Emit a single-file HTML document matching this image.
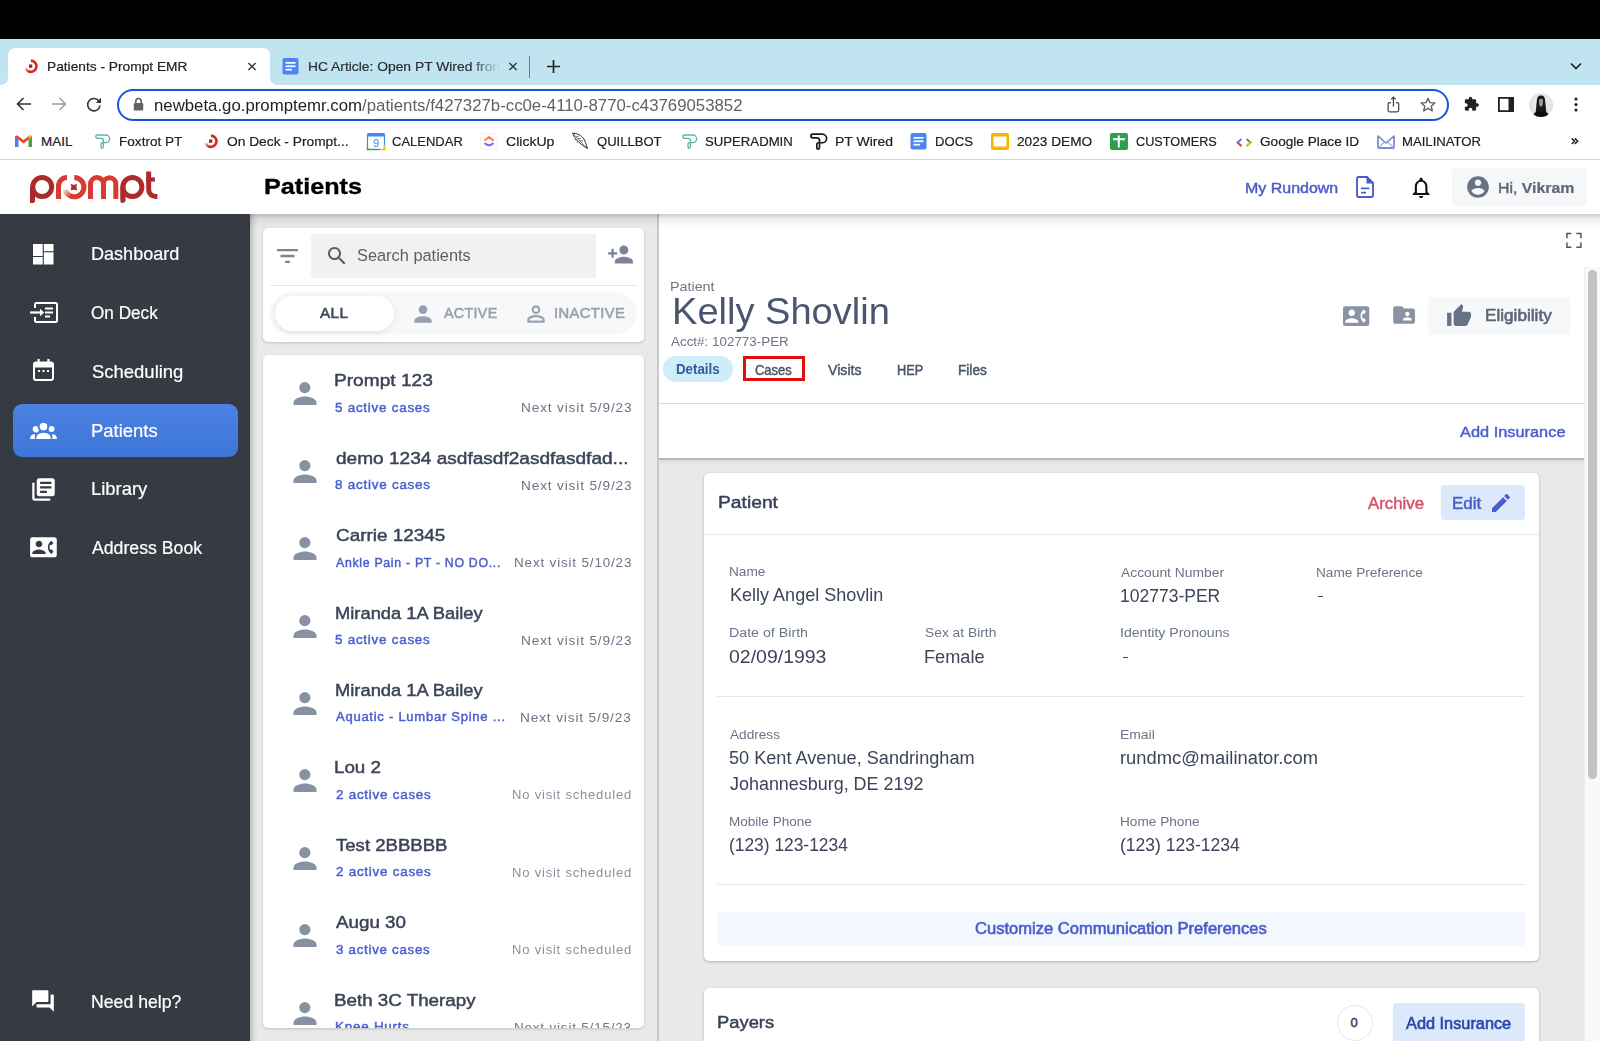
<!DOCTYPE html>
<html><head><meta charset="utf-8">
<style>
*{box-sizing:border-box;margin:0;padding:0}
html,body{width:1600px;height:1041px;overflow:hidden;background:#fff;font-family:"Liberation Sans",sans-serif}
.a{position:absolute}
.t{position:absolute;white-space:nowrap;line-height:1}
svg{position:absolute;display:block;overflow:visible}
</style></head><body>
<div class="a" style="left:0px;top:0px;width:1600px;height:39px;background:#000;"></div>
<div class="a" style="left:0px;top:39px;width:1600px;height:46px;background:#c1e5f0;"></div>
<div class="a" style="left:0px;top:85px;width:1600px;height:74px;background:#fff;"></div>
<div class="a" style="left:0px;top:159px;width:1600px;height:1px;background:#d4d4d4;"></div>
<svg style="left:0;top:47px" width="290" height="38" viewBox="0 0 290 38"><path d="M0 38 Q8 38 8 30 V9 Q8 1 16 1 H262 Q270 1 270 9 V30 Q270 38 278 38 Z" fill="#fff"/></svg>
<svg style="left:24px;top:59px;" width="14" height="14" viewBox="0 0 14 14"><defs><linearGradient id="fvg" x1="4.5" y1="12.5" x2="1" y2="8" gradientUnits="userSpaceOnUse"><stop offset="0" stop-color="#d8261f"/><stop offset="1" stop-color="#d8261f" stop-opacity="0"/></linearGradient></defs><path d="M6.9 1.65 A5.6 5.6 0 1 1 4.1 12.1" fill="none" stroke="#d8261f" stroke-width="2.6"/><path d="M4.1 12.1 A5.6 5.6 0 0 1 1.5 8.7" fill="none" stroke="url(#fvg)" stroke-width="2.6"/><rect x="5" y="5.5" width="3.3" height="3.3" fill="#a8201a"/></svg>
<div id="t1" class="t" style="left:47.10px;top:60.36px;font-size:13.19px;color:#202124;font-weight:400;-webkit-text-stroke:0.2px currentColor;transform:scaleX(1.0414);transform-origin:0 0;">Patients - Prompt EMR</div>
<svg style="left:247px;top:62px;" width="10" height="9" viewBox="0 0 10 10"><path d="M1 1 L9 9 M9 1 L1 9" stroke="#333" stroke-width="1.5"/></svg>
<svg style="left:282px;top:58px;" width="17" height="17" viewBox="0 0 17 17"><rect x="0.5" y="0" width="16" height="16.5" rx="2" fill="#4d86f0"/><rect x="3.5" y="4" width="10" height="1.7" fill="#fff"/><rect x="3.5" y="7.4" width="10" height="1.7" fill="#fff"/><rect x="3.5" y="10.8" width="6.5" height="1.7" fill="#fff"/></svg>
<div id="t2" class="t" style="left:307.51px;top:60.36px;font-size:13.19px;color:#2a2f33;font-weight:400;-webkit-text-stroke:0.2px currentColor;transform:scaleX(1.0495);transform-origin:0 0;-webkit-mask-image:linear-gradient(90deg,#000 85%,transparent);">HC Article: Open PT Wired fron</div>
<svg style="left:508px;top:62px;" width="10" height="9" viewBox="0 0 10 10"><path d="M1 1 L9 9 M9 1 L1 9" stroke="#333" stroke-width="1.5"/></svg>
<div class="a" style="left:529px;top:56px;width:1px;height:22px;background:#6d7b80;"></div>
<svg style="left:547px;top:60px;" width="13" height="13" viewBox="0 0 13 13"><path d="M6.5 0 V13 M0 6.5 H13" stroke="#222" stroke-width="1.7"/></svg>
<svg style="left:1570px;top:62px;" width="12" height="8" viewBox="0 0 12 8"><path d="M1 1.5 L6 6.5 L11 1.5" fill="none" stroke="#222" stroke-width="1.7"/></svg>
<svg style="left:16px;top:97px;" width="16" height="14" viewBox="0 0 16 14"><path d="M15 7 H2 M7.5 1 L1.5 7 L7.5 13" fill="none" stroke="#333" stroke-width="1.6"/></svg>
<svg style="left:51px;top:97px;" width="16" height="14" viewBox="0 0 16 14"><path d="M1 7 H14 M8.5 1 L14.5 7 L8.5 13" fill="none" stroke="#9aa0a6" stroke-width="1.6"/></svg>
<svg style="left:86px;top:97px;" width="16" height="15" viewBox="0 0 16 15"><path d="M13.2 4.5 A6.2 6.2 0 1 0 14 8.5" fill="none" stroke="#333" stroke-width="1.6"/><path d="M15 0.8 V6 H9.8 Z" fill="#333"/></svg>
<div class="a" style="left:117px;top:88.5px;width:1331.5px;height:32.3px;background:#fff;border:2px solid #1a55d6;border-radius:16.5px;"></div>
<svg style="left:133px;top:97px;" width="11" height="14" viewBox="0 0 11 14"><path d="M2.8 6 V4.2 A2.7 2.7 0 0 1 8.2 4.2 V6" fill="none" stroke="#5f6368" stroke-width="1.6"/><rect x="0.8" y="6" width="9.4" height="7.5" rx="1.2" fill="#5f6368"/></svg>
<div id="t3" class="t" style="left:154.21px;top:97.57px;font-size:15.65px;color:#202124;font-weight:400;transform:scaleX(1.0731);transform-origin:0 0;">newbeta.go.promptemr.com<span style="color:#5f6368">/patients/f427327b-cc0e-4110-8770-c43769053852</span></div>
<svg style="left:1387px;top:96px;" width="13" height="17" viewBox="0 0 13 17"><path d="M4 6.6 H2.6 Q1.1 6.6 1.1 8.1 V14.3 Q1.1 15.8 2.6 15.8 H10.2 Q11.7 15.8 11.7 14.3 V8.1 Q11.7 6.6 10.2 6.6 H8.8 M6.4 10.6 V1.2 M4.2 3.4 L6.4 1.2 L8.6 3.4" fill="none" stroke="#454545" stroke-width="1.25"/></svg>
<svg style="left:1420px;top:97px;" width="16" height="15" viewBox="0 0 16 15"><path d="M8 1.2 L10 5.6 L14.8 6 L11.2 9.2 L12.3 13.9 L8 11.4 L3.7 13.9 L4.8 9.2 L1.2 6 L6 5.6 Z" fill="none" stroke="#5f6368" stroke-width="1.4" stroke-linejoin="round"/></svg>
<svg style="left:1463px;top:96px;" width="17" height="16" viewBox="0 0 24 24"><path d="M20.5 11H19V7c0-1.1-.9-2-2-2h-4V3.5C13 2.12 11.88 1 10.5 1S8 2.12 8 3.5V5H4c-1.1 0-1.99.9-1.99 2v3.8H3.5c1.49 0 2.7 1.21 2.7 2.7s-1.21 2.7-2.7 2.7H2V20c0 1.1.9 2 2 2h3.8v-1.5c0-1.49 1.21-2.7 2.7-2.7 1.49 0 2.7 1.21 2.7 2.7V22H17c1.1 0 2-.9 2-2v-4h1.5c1.38 0 2.5-1.12 2.5-2.5S21.88 11 20.5 11z" fill="#222"/></svg>
<svg style="left:1498px;top:97px;" width="16" height="15" viewBox="0 0 16 15"><rect x="0.9" y="0.9" width="14.2" height="13.2" fill="none" stroke="#222" stroke-width="1.8"/><rect x="10.5" y="0.9" width="4.6" height="13.2" fill="#222"/></svg>
<div class="a" style="left:1529px;top:92.5px;width:24px;height:24px;border-radius:50%;background:radial-gradient(circle at 50% 40%,#f2f2f2,#d8d8d8);overflow:hidden"><svg style="left:0;top:0" width="24" height="24" viewBox="0 0 24 24"><path d="M6.5 22 C7 16 7.5 10 8 6.5 C8.6 3.2 10 2.6 12 2.6 C14 2.6 15.4 3.2 16 6.5 C16.5 10 17 16 17.5 22 Z" fill="#1a1a1a"/><path d="M10 6.5 Q12 4.8 14 6.5 L13.8 12 Q12 15.5 10.2 12 Z" fill="#9a9a9a"/><path d="M3 25 Q4 19.5 9 18 L12 19.5 L15 18 Q20 19.5 21 25 Z" fill="#0d0d0d"/></svg></div>
<svg style="left:1574px;top:97px;" width="4" height="15" viewBox="0 0 4 15"><circle cx="2" cy="2" r="1.6" fill="#222"/><circle cx="2" cy="7.5" r="1.6" fill="#222"/><circle cx="2" cy="13" r="1.6" fill="#222"/></svg>
<svg style="left:15px;top:135px;" width="17" height="12" viewBox="0 0 17 12"><path d="M0 1.5 V12 H3.3 V4.5 L8.5 8.5 L13.7 4.5 V12 H17 V1.5 Q15.8 0 14.2 0.8 L8.5 5 L2.8 0.8 Q1.2 0 0 1.5 Z" fill="#ea4335"/><path d="M0 1.5 V12 H3.3 V4.5 Z" fill="#4285f4"/><path d="M13.7 4.5 V12 H17 V1.5 Z" fill="#34a853"/><path d="M13.7 4.5 L17 1.5 Q16 0 14.2 0.8 L13.7 1.2 Z" fill="#fbbc04"/></svg>
<div id="t4" class="t" style="left:41.11px;top:135.11px;font-size:13.48px;color:#202124;font-weight:400;-webkit-text-stroke:0.2px currentColor;transform:scaleX(1.0000);transform-origin:0 0;">MAIL</div>
<svg style="left:95px;top:134px;" width="15" height="15" viewBox="0 0 15 15"><path d="M2.2 1 H10.8 A3.8 3.8 0 0 1 10.8 8.6 H7.6 Q6 8.6 6 10.2 V12.8 Q6 14.4 7.2 14.3 Q8.4 14.1 8.4 12.6 V6.6 Q8.4 4.3 6.2 4.3 H2.6 Q0.8 4.3 0.8 2.6 Q0.8 1 2.2 1 Z" fill="none" stroke="#5db3a8" stroke-width="1.3"/></svg>
<div id="t5" class="t" style="left:118.93px;top:135.11px;font-size:13.48px;color:#202124;font-weight:400;-webkit-text-stroke:0.2px currentColor;transform:scaleX(1.0081);transform-origin:0 0;">Foxtrot PT</div>
<svg style="left:204px;top:134px;" width="14" height="14" viewBox="0 0 14 14"><defs><linearGradient id="fvg" x1="4.5" y1="12.5" x2="1" y2="8" gradientUnits="userSpaceOnUse"><stop offset="0" stop-color="#d8261f"/><stop offset="1" stop-color="#d8261f" stop-opacity="0"/></linearGradient></defs><path d="M6.9 1.65 A5.6 5.6 0 1 1 4.1 12.1" fill="none" stroke="#d8261f" stroke-width="2.6"/><path d="M4.1 12.1 A5.6 5.6 0 0 1 1.5 8.7" fill="none" stroke="url(#fvg)" stroke-width="2.6"/><rect x="5" y="5.5" width="3.3" height="3.3" fill="#a8201a"/></svg>
<div id="t6" class="t" style="left:226.93px;top:135.11px;font-size:13.48px;color:#202124;font-weight:400;-webkit-text-stroke:0.2px currentColor;transform:scaleX(1.0212);transform-origin:0 0;">On Deck - Prompt...</div>
<svg style="left:367px;top:133px;" width="18" height="17" viewBox="0 0 18 17"><rect x="0.5" y="0.5" width="17" height="16" rx="1.5" fill="#fff" stroke="#4285f4" stroke-width="1.2"/><path d="M0.5 15 V16.5 H13" stroke="#34a853" stroke-width="1.6" fill="none"/><path d="M17.5 12 V16.5 H13" stroke="#fbbc04" stroke-width="1.6" fill="none"/><rect x="0.5" y="0.5" width="17" height="3" fill="#4285f4"/><text x="9" y="14" font-size="11" text-anchor="middle" fill="#4285f4" font-family="Liberation Sans">9</text></svg>
<div id="t7" class="t" style="left:392.29px;top:135.11px;font-size:13.48px;color:#202124;font-weight:400;-webkit-text-stroke:0.2px currentColor;transform:scaleX(0.9653);transform-origin:0 0;">CALENDAR</div>
<svg style="left:480px;top:133px;" width="18" height="17" viewBox="0 0 18 17"><rect x="0.5" y="0.5" width="17" height="16" rx="3" fill="#fff" stroke="#eee" stroke-width="0.8"/><path d="M5 7.2 L9 4 L13 7.2" fill="none" stroke="#ff7a59" stroke-width="2" stroke-linecap="round"/><path d="M5 10.5 Q9 14 13 10.5" fill="none" stroke="#7b68ee" stroke-width="2" stroke-linecap="round"/></svg>
<div id="t8" class="t" style="left:505.79px;top:135.11px;font-size:13.48px;color:#202124;font-weight:400;-webkit-text-stroke:0.2px currentColor;transform:scaleX(1.0435);transform-origin:0 0;">ClickUp</div>
<svg style="left:571px;top:132px;" width="18" height="18" viewBox="0 0 18 18"><path d="M1.5 1 Q9 1.5 13 7 Q15 11 16.5 16.5 Q11 13.5 7 9.5 Q3 5.5 1.5 1 Z" fill="none" stroke="#333" stroke-width="1"/><path d="M2.5 2 L16 16.5 M5 5 L7.5 4.3 M7 7 L10 6.3 M9 9 L12 8.8 M4.5 6 L4 8.5 M6.5 8.3 L6.3 10.5" stroke="#444" stroke-width="0.7"/></svg>
<div id="t9" class="t" style="left:597.21px;top:135.11px;font-size:13.48px;color:#202124;font-weight:400;-webkit-text-stroke:0.2px currentColor;transform:scaleX(0.9697);transform-origin:0 0;">QUILLBOT</div>
<svg style="left:682px;top:134px;" width="15" height="15" viewBox="0 0 15 15"><path d="M2.2 1 H10.8 A3.8 3.8 0 0 1 10.8 8.6 H7.6 Q6 8.6 6 10.2 V12.8 Q6 14.4 7.2 14.3 Q8.4 14.1 8.4 12.6 V6.6 Q8.4 4.3 6.2 4.3 H2.6 Q0.8 4.3 0.8 2.6 Q0.8 1 2.2 1 Z" fill="none" stroke="#5db3a8" stroke-width="1.3"/></svg>
<div id="t10" class="t" style="left:705.27px;top:135.11px;font-size:13.48px;color:#202124;font-weight:400;-webkit-text-stroke:0.2px currentColor;transform:scaleX(0.9773);transform-origin:0 0;">SUPERADMIN</div>
<svg style="left:810px;top:133px;" width="17" height="17" viewBox="0 0 15 15"><path d="M2.2 1 H10.8 A3.8 3.8 0 0 1 10.8 8.6 H7.6 Q6 8.6 6 10.2 V12.8 Q6 14.4 7.2 14.3 Q8.4 14.1 8.4 12.6 V6.6 Q8.4 4.3 6.2 4.3 H2.6 Q0.8 4.3 0.8 2.6 Q0.8 1 2.2 1 Z" fill="none" stroke="#1a1a1a" stroke-width="1.5"/></svg>
<div id="t11" class="t" style="left:834.72px;top:135.11px;font-size:13.48px;color:#202124;font-weight:400;-webkit-text-stroke:0.2px currentColor;transform:scaleX(1.0370);transform-origin:0 0;">PT Wired</div>
<svg style="left:910px;top:133px;" width="17" height="17" viewBox="0 0 17 17"><rect x="0.5" y="0" width="16" height="16.5" rx="2" fill="#4d86f0"/><rect x="3.5" y="4" width="10" height="1.7" fill="#fff"/><rect x="3.5" y="7.4" width="10" height="1.7" fill="#fff"/><rect x="3.5" y="10.8" width="6.5" height="1.7" fill="#fff"/></svg>
<div id="t12" class="t" style="left:935.24px;top:135.11px;font-size:13.48px;color:#202124;font-weight:400;-webkit-text-stroke:0.2px currentColor;transform:scaleX(0.9737);transform-origin:0 0;">DOCS</div>
<svg style="left:991px;top:133px;" width="18" height="17" viewBox="0 0 18 17"><rect x="0" y="0" width="18" height="17" rx="2" fill="#f4b400"/><rect x="2.5" y="3.5" width="13" height="10" fill="#fff"/></svg>
<div id="t13" class="t" style="left:1016.89px;top:135.11px;font-size:13.48px;color:#202124;font-weight:400;-webkit-text-stroke:0.2px currentColor;transform:scaleX(1.0137);transform-origin:0 0;">2023 DEMO</div>
<svg style="left:1110px;top:133px;" width="18" height="17" viewBox="0 0 18 17"><rect x="0" y="0" width="18" height="17" rx="2" fill="#2f9e4f"/><rect x="3" y="5.2" width="12" height="2" fill="#fff"/><rect x="7.8" y="2.5" width="2" height="12" fill="#fff"/></svg>
<div id="t14" class="t" style="left:1136.41px;top:135.11px;font-size:13.48px;color:#202124;font-weight:400;-webkit-text-stroke:0.2px currentColor;transform:scaleX(0.9412);transform-origin:0 0;">CUSTOMERS</div>
<svg style="left:1236px;top:137.5px;" width="16" height="9" viewBox="0 0 16 9"><path d="M5.5 1 L1.5 4.5 L5.5 8" fill="none" stroke="#4285f4" stroke-width="1.9"/><path d="M1.5 4.5 L5.5 8" stroke="#ea4335" stroke-width="1.9"/><path d="M10.5 1 L14.5 4.5 L10.5 8" fill="none" stroke="#34a853" stroke-width="1.9"/><path d="M14.5 4.5 L10.5 8" stroke="#fbbc04" stroke-width="1.9"/></svg>
<div id="t15" class="t" style="left:1259.93px;top:135.11px;font-size:13.48px;color:#202124;font-weight:400;-webkit-text-stroke:0.2px currentColor;transform:scaleX(1.0103);transform-origin:0 0;">Google Place ID</div>
<svg style="left:1377px;top:135px;" width="18" height="14" viewBox="0 0 18 14"><path d="M1 1 V13 H17 V1 L9 8 Z" fill="none" stroke="#5664c4" stroke-width="1.3" stroke-linejoin="round"/><path d="M1 13 L7 7.5 M17 13 L11 7.5" stroke="#86b8e6" stroke-width="1.1"/><path d="M1 1 L9 8 L17 1" fill="none" stroke="#7fb2e5" stroke-width="0.9"/></svg>
<div id="t16" class="t" style="left:1402.27px;top:135.11px;font-size:13.48px;color:#202124;font-weight:400;-webkit-text-stroke:0.2px currentColor;transform:scaleX(0.9750);transform-origin:0 0;">MAILINATOR</div>
<svg style="left:1565px;top:133px;" width="20" height="16" viewBox="1565 133 20 16"><path d="M1572.2 138.9 L1574.6 141.2 L1572.2 143.5 M1575.3 138.9 L1577.7 141.2 L1575.3 143.5" fill="none" stroke="#1a1a1a" stroke-width="1.5" stroke-linecap="round" stroke-linejoin="round"/></svg>
<div class="a" style="left:0px;top:160px;width:1600px;height:54px;background:#fff;"></div>
<svg style="left:28px;top:170px;" width="132" height="36" viewBox="28 170 132 36">
<defs><linearGradient id="lgf" x1="70" y1="197" x2="63" y2="188" gradientUnits="userSpaceOnUse"><stop offset="0" stop-color="#d93a30"/><stop offset="1" stop-color="#d93a30" stop-opacity="0"/></linearGradient></defs>
<g fill="none" stroke-width="5" stroke-linecap="butt">
<path d="M32.5 200.5 V187" stroke="#ad2a2c"/>
<circle cx="42.2" cy="187" r="9.5" stroke="#ad2a2c"/>
<path d="M58.5 199 V186 A8.5 8.5 0 0 1 67 177.5" stroke="#d93a30"/>
<path d="M74.3 177.6 A9.6 9.6 0 1 1 69.5 195.5" stroke="#d93a30"/>
<path d="M69.5 195.5 A9.6 9.6 0 0 1 65 189.7" stroke="url(#lgf)"/>
<path d="M90.5 199 V184 A6.5 6.5 0 0 1 103.5 184 V199 M103.3 184 A6.25 6.25 0 0 1 115.8 184 V199" stroke="#d93a30"/>
<path d="M122.9 200.5 V187" stroke="#ad2a2c"/>
<circle cx="132.4" cy="187" r="9.5" stroke="#ad2a2c"/>
<path d="M148.65 171.5 V189.5 A7 7 0 0 0 155.65 196.5 H157.4" stroke="#ad2a2c"/>
</g>
<path d="M30 187 H35 V201 Q35 203 33 203 H30 Z M120.6 187 H125.3 V201 Q125.3 202.8 123.3 202.8 H120.6 Z" fill="#ad2a2c"/>
<rect x="146.2" y="177.4" width="8.7" height="4.2" fill="#ad2a2c"/>
<path d="M70.7 184.1 Q73.9 185.5 77.1 184.1 Q75.7 187.3 77.1 190.5 Q73.9 189.1 70.7 190.5 Q72.1 187.3 70.7 184.1 Z" fill="#b02a2a"/>
</svg>
<div id="t17" class="t" style="left:263.80px;top:176.30px;font-size:22.39px;color:#000;font-weight:700;-webkit-text-stroke:0.35px currentColor;transform:scaleX(1.1250);transform-origin:0 0;">Patients</div>
<div id="t18" class="t" style="left:1245.18px;top:180.06px;font-size:15.29px;color:#4a5dcc;font-weight:400;-webkit-text-stroke:0.45px currentColor;transform:scaleX(1.0455);transform-origin:0 0;">My Rundown</div>
<svg style="left:1356px;top:176px;" width="18" height="22" viewBox="0 0 18 22"><path d="M2.5 1 H11 L17 7 V19.5 Q17 21 15.5 21 H2.5 Q1 21 1 19.5 V2.5 Q1 1 2.5 1 Z" fill="none" stroke="#4a5dcc" stroke-width="1.9"/><path d="M10.5 0.5 L17.5 7.5 H10.5 Z" fill="#4a5dcc"/><path d="M5 12.3 H13.3 M5 16.7 H10" stroke="#4a5dcc" stroke-width="1.8"/></svg>
<svg style="left:1408.4px;top:174.8px;" width="26.25" height="25.3" viewBox="0 0 24 24"><path d="M12 22c1.1 0 2-.9 2-2h-4c0 1.1.89 2 2 2zm6-6v-5c0-3.07-1.64-5.64-4.5-6.32V4c0-.83-.67-1.5-1.5-1.5s-1.5.67-1.5 1.5v.68C7.63 5.36 6 7.92 6 11v5l-2 2v1h16v-1l-2-2zm-2 1H8v-6c0-2.48 1.51-4.5 4-4.5s4 2.02 4 4.5v6z" fill="#111"/></svg>
<div class="a" style="left:1452px;top:168px;width:135px;height:38px;background:#f6f7f9;border-radius:3px;"></div>
<svg style="left:1465px;top:174px;" width="26" height="26" viewBox="0 0 24 24"><path d="M12 2C6.48 2 2 6.48 2 12s4.48 10 10 10 10-4.48 10-10S17.52 2 12 2zm0 3c1.66 0 3 1.34 3 3s-1.34 3-3 3-3-1.34-3-3 1.34-3 3-3zm0 14.2c-2.5 0-4.71-1.28-6-3.22.03-1.99 4-3.08 6-3.08 1.99 0 5.97 1.09 6 3.08-1.29 1.94-3.5 3.22-6 3.22z" fill="#687185"/></svg>
<div id="t19" class="t" style="left:1497.85px;top:180.30px;font-size:15.00px;color:#5d6678;font-weight:400;-webkit-text-stroke:0.45px currentColor;transform:scaleX(1.0577);transform-origin:0 0;">Hi, <b style="-webkit-text-stroke:0.2px currentColor">Vikram</b></div>
<div class="a" style="left:0px;top:214px;width:250px;height:827px;background:#363a42;"></div>
<div class="a" style="left:13px;top:404px;width:225px;height:53px;background:linear-gradient(#4a81e2,#3e76d8);border-radius:9px;"></div>
<svg style="left:33px;top:243.5px;" width="20.5" height="20.5" viewBox="0 0 20.5 20.5"><rect x="0" y="0" width="9.7" height="12" fill="#fff"/><rect x="0" y="13" width="9.7" height="7.5" fill="#fff"/><rect x="10.8" y="0" width="9.7" height="7.2" fill="#fff"/><rect x="10.8" y="8.3" width="9.7" height="12.2" fill="#fff"/></svg>
<div id="t20" class="t" style="left:91.20px;top:245.02px;font-size:18.55px;color:#fff;font-weight:400;-webkit-text-stroke:0.2px currentColor;transform:scaleX(0.9742);transform-origin:0 0;">Dashboard</div>
<svg style="left:29.5px;top:301.5px;" width="28" height="21" viewBox="0 0 28 21"><path d="M5 6 V2.5 Q5 1 6.5 1 H25.5 Q27 1 27 2.5 V18.5 Q27 20 25.5 20 H6.5 Q5 20 5 18.5 V15" fill="none" stroke="#fff" stroke-width="2"/><path d="M0 10.5 H12" stroke="#fff" stroke-width="2.2"/><path d="M10 6.8 L14.2 10.5 L10 14.2 Z" fill="#fff"/><rect x="15" y="5.5" width="8" height="2" fill="#fff"/><rect x="15" y="9.5" width="8" height="2" fill="#fff"/><rect x="15" y="13.5" width="5" height="2" fill="#fff"/></svg>
<div id="t21" class="t" style="left:91.27px;top:303.52px;font-size:18.55px;color:#fff;font-weight:400;-webkit-text-stroke:0.2px currentColor;transform:scaleX(0.9254);transform-origin:0 0;">On Deck</div>
<svg style="left:33px;top:359px;" width="21" height="22" viewBox="0 0 21 22"><rect x="1" y="3.5" width="19" height="17.5" rx="2" fill="none" stroke="#fff" stroke-width="2"/><rect x="1" y="3.5" width="19" height="5" fill="#fff"/><rect x="4.5" y="0" width="2.2" height="4" fill="#fff"/><rect x="14.3" y="0" width="2.2" height="4" fill="#fff"/><rect x="5" y="11" width="2" height="2" fill="#fff"/><rect x="9.5" y="11" width="2" height="2" fill="#fff"/><rect x="14" y="11" width="2" height="2" fill="#fff"/></svg>
<div id="t22" class="t" style="left:91.54px;top:362.52px;font-size:18.55px;color:#fff;font-weight:400;-webkit-text-stroke:0.2px currentColor;transform:scaleX(0.9967);transform-origin:0 0;">Scheduling</div>
<svg style="left:26px;top:416px;" width="36" height="28" viewBox="26 416 36 28"><circle cx="43.5" cy="426.6" r="3.95" fill="#fff"/><path d="M38.7 428.5 A3 3 0 1 0 38.3 431.4 Q38.9 430 39.3 429.3 Z" fill="#fff"/><circle cx="35.7" cy="428.9" r="3" fill="#fff"/><circle cx="51.5" cy="428.9" r="3" fill="#fff"/><path d="M36.2 438.9 Q36.2 432.8 43.55 432.8 Q50.9 432.8 50.9 438.9 Z" fill="#fff"/><path d="M30 438.9 Q30 434.8 34.9 434 L34.9 438.9 Z" fill="#fff"/><path d="M56.9 438.9 Q56.9 434.8 52.3 434 L52.3 438.9 Z" fill="#fff"/><circle cx="43.5" cy="426.6" r="5" fill="none" stroke="#4580e0" stroke-width="1.6"/></svg>
<div id="t23" class="t" style="left:91.40px;top:421.52px;font-size:18.55px;color:#fff;font-weight:400;-webkit-text-stroke:0.2px currentColor;transform:scaleX(0.9955);transform-origin:0 0;">Patients</div>
<svg style="left:30.25px;top:475.5px;" width="27" height="27" viewBox="0 0 24 24"><path d="M4 6H2v14c0 1.1.9 2 2 2h14v-2H4V6zm16-4H8c-1.1 0-2 .9-2 2v12c0 1.1.9 2 2 2h12c1.1 0 2-.9 2-2V4c0-1.1-.9-2-2-2zm-1 9H9V9h10v2zm-4 4H9v-2h6v2zm4-8H9V5h10v2z" fill="#fff"/></svg>
<div id="t24" class="t" style="left:90.85px;top:480.02px;font-size:18.55px;color:#fff;font-weight:400;-webkit-text-stroke:0.2px currentColor;transform:scaleX(0.9945);transform-origin:0 0;">Library</div>
<svg style="left:30px;top:534.2px;" width="26.9" height="26.7" viewBox="0 0 24 24"><path d="M22 3H2C.9 3 0 3.9 0 5v14c0 1.1.9 2 2 2h20c1.1 0 1.99-.9 1.99-2L24 5c0-1.1-.9-2-2-2zM8 6c1.660 0 3 1.34 3 3s-1.34 3-3 3-3-1.34-3-3 1.34-3 3-3zm6 12H2v-1c0-2 4-3.100 6-3.100s6 1.100 6 3.100v1zm3.85-4h1.64L21 16l-1.99 1.99c-1.31-.98-2.28-2.38-2.73-3.99-.18-.64-.28-1.31-.28-2s.1-1.36.28-2c.45-1.62 1.42-3.01 2.73-3.99L21 8l-1.51 2h-1.64c-.22.63-.35 1.3-.35 2s.13 1.37.35 2z" fill="#fff"/></svg>
<div id="t25" class="t" style="left:91.87px;top:539.02px;font-size:18.55px;color:#fff;font-weight:400;-webkit-text-stroke:0.2px currentColor;transform:scaleX(0.9539);transform-origin:0 0;">Address Book</div>
<svg style="left:30px;top:988px;" width="26" height="26" viewBox="0 0 24 24"><path d="M21 6h-2v9H6v2c0 .55.45 1 1 1h11l4 4V7c0-.55-.45-1-1-1zm-4 6V3c0-.55-.45-1-1-1H3c-.55 0-1 .45-1 1v14l4-4h10c.55 0 1-.45 1-1z" fill="#fff"/></svg>
<div id="t26" class="t" style="left:91.23px;top:993.02px;font-size:18.55px;color:#fff;font-weight:400;-webkit-text-stroke:0.2px currentColor;transform:scaleX(0.9538);transform-origin:0 0;">Need help?</div>
<div class="a" style="left:250px;top:214px;width:408px;height:827px;background:#e9e9e9;"></div>
<div class="a" style="left:263px;top:228px;width:381px;height:114px;background:#fff;border-radius:5px;box-shadow:0 1px 3px rgba(0,0,0,0.18);"></div>
<svg style="left:277px;top:249px;" width="21" height="14" viewBox="3 6 18 12"><path d="M10 18h4v-2h-4v2zM3 6v2h18V6H3zm3 7h12v-2H6v2z" fill="#7a8496"/></svg>
<div class="a" style="left:311px;top:234px;width:285px;height:43.5px;background:#f1f1f1;border-radius:3px;"></div>
<svg style="left:325px;top:244px;" width="24" height="24" viewBox="0 0 24 24"><path d="M15.5 14h-.79l-.28-.27C15.41 12.59 16 11.11 16 9.5 16 5.91 13.09 3 9.5 3S3 5.91 3 9.5 5.91 16 9.5 16c1.61 0 3.09-.59 4.230-1.570l.27.28v.79l5 4.99L20.49 19l-4.99-5zm-6 0C7.01 14 5 11.99 5 9.5S7.01 5 9.5 5 14 7.01 14 9.5 11.99 14 9.5 14z" fill="#5d5d5d"/></svg>
<div id="t27" class="t" style="left:357.04px;top:247.72px;font-size:16.67px;color:#5f5f5f;font-weight:400;transform:scaleX(0.9826);transform-origin:0 0;">Search patients</div>
<svg style="left:607px;top:244px;" width="27" height="22" viewBox="0 3 24 19"><path d="M15 12c2.21 0 4-1.79 4-4s-1.79-4-4-4-4 1.79-4 4 1.79 4 4 4zm-9-2V7H4v3H1v2h3v3h2v-3h3v-2H6zm9 4c-2.67 0-8 1.34-8 4v2h16v-2c0-2.66-5.33-4-8-4z" fill="#7a8496"/></svg>
<div class="a" style="left:270px;top:284.6px;width:368px;height:1px;background:#e4e6ea;"></div>
<div class="a" style="left:270px;top:292px;width:367px;height:43px;background:#f7f8fa;border-radius:22px;"></div>
<div class="a" style="left:274.5px;top:296px;width:119.5px;height:35px;background:#fff;border-radius:18px;box-shadow:0 2px 6px rgba(60,70,90,0.12);"></div>
<div id="t28" class="t" style="left:320.36px;top:305.30px;font-size:15.51px;color:#3d4a60;font-weight:400;-webkit-text-stroke:0.6px currentColor;transform:scaleX(0.9821);transform-origin:0 0;letter-spacing:0.4px;">ALL</div>
<svg style="left:410px;top:301px;" width="26" height="26" viewBox="0 0 24 24"><path d="M12 12c2.21 0 4-1.79 4-4s-1.79-4-4-4-4 1.79-4 4 1.790 4 4 4zm0 2c-2.67 0-8 1.34-8 4v2h16v-2c0-2.66-5.33-4-8-4z" fill="#98a0b0"/></svg>
<div id="t29" class="t" style="left:444.13px;top:305.30px;font-size:15.51px;color:#9aa1ae;font-weight:400;-webkit-text-stroke:0.6px currentColor;transform:scaleX(0.9172);transform-origin:0 0;letter-spacing:0.4px;">ACTIVE</div>
<svg style="left:522.5px;top:301.3px;" width="26" height="26" viewBox="0 0 24 24"><path d="M12 5.9c1.16 0 2.1.94 2.1 2.1s-.94 2.1-2.1 2.1S9.9 9.16 9.9 8s.94-2.1 2.1-2.1m0 9c2.97 0 6.1 1.46 6.1 2.1v1.1H5.9V17c0-.64 3.130-2.1 6.1-2.1M12 4C9.79 4 8 5.79 8 8s1.79 4 4 4 4-1.79 4-4-1.79-4-4-4zm0 9c-2.67 0-8 1.34-8 4v3h16v-3c0-2.66-5.33-4-8-4z" fill="#98a0b0"/></svg>
<div id="t30" class="t" style="left:554.21px;top:305.30px;font-size:15.51px;color:#9aa1ae;font-weight:400;-webkit-text-stroke:0.6px currentColor;transform:scaleX(0.9521);transform-origin:0 0;letter-spacing:0.4px;">INACTIVE</div>
<div class="a" style="left:263px;top:355px;width:381px;height:673px;background:#fff;border-radius:5px;box-shadow:0 1px 3px rgba(0,0,0,0.18);overflow:hidden">
<svg style="left:29.600000000000012px;top:27.400000000000034px;" width="24" height="24" viewBox="0 0 24 24"><circle cx="11.8" cy="5.6" r="5.6" fill="#8891a2"/><path d="M0.5 23 V20.5 C0.5 16.5 7 14.4 12 14.4 C17 14.4 23.5 16.5 23.5 20.5 V23 Z" fill="#8891a2"/></svg>
<div id="t31" class="t" style="left:71.13px;top:18.35px;font-size:16.59px;color:#3b4357;font-weight:400;-webkit-text-stroke:0.45px currentColor;transform:scaleX(1.1524);transform-origin:0 0;">Prompt 123</div>
<div id="t32" class="t" style="left:72.43px;top:46.70px;font-size:12.39px;color:#4a5fd0;font-weight:400;-webkit-text-stroke:0.45px currentColor;transform:scaleX(1.0828);transform-origin:0 0;letter-spacing:0.7px;">5 active cases</div>
<div id="t33" class="t" style="left:258.10px;top:46.38px;font-size:13.04px;color:#6b7385;font-weight:400;transform:scaleX(1.0481);transform-origin:0 0;letter-spacing:0.8px;">Next visit 5/9/23</div>
<svg style="left:29.600000000000012px;top:104.80000000000007px;" width="24" height="24" viewBox="0 0 24 24"><circle cx="11.8" cy="5.6" r="5.6" fill="#8891a2"/><path d="M0.5 23 V20.5 C0.5 16.5 7 14.4 12 14.4 C17 14.4 23.5 16.5 23.5 20.5 V23 Z" fill="#8891a2"/></svg>
<div id="t34" class="t" style="left:72.82px;top:95.75px;font-size:16.59px;color:#3b4357;font-weight:400;-webkit-text-stroke:0.45px currentColor;transform:scaleX(1.1498);transform-origin:0 0;">demo 1234 asdfasdf2asdfasdfad...</div>
<div id="t35" class="t" style="left:72.27px;top:124.10px;font-size:12.39px;color:#4a5fd0;font-weight:400;-webkit-text-stroke:0.45px currentColor;transform:scaleX(1.0862);transform-origin:0 0;letter-spacing:0.7px;">8 active cases</div>
<div id="t36" class="t" style="left:258.10px;top:123.78px;font-size:13.04px;color:#6b7385;font-weight:400;transform:scaleX(1.0481);transform-origin:0 0;letter-spacing:0.8px;">Next visit 5/9/23</div>
<svg style="left:29.600000000000012px;top:182.20000000000005px;" width="24" height="24" viewBox="0 0 24 24"><circle cx="11.8" cy="5.6" r="5.6" fill="#8891a2"/><path d="M0.5 23 V20.5 C0.5 16.5 7 14.4 12 14.4 C17 14.4 23.5 16.5 23.5 20.5 V23 Z" fill="#8891a2"/></svg>
<div id="t37" class="t" style="left:72.53px;top:173.15px;font-size:16.59px;color:#3b4357;font-weight:400;-webkit-text-stroke:0.45px currentColor;transform:scaleX(1.1389);transform-origin:0 0;">Carrie 12345</div>
<div id="t38" class="t" style="left:73.25px;top:201.50px;font-size:12.39px;color:#4a5fd0;font-weight:400;-webkit-text-stroke:0.45px currentColor;transform:scaleX(0.9952);transform-origin:0 0;letter-spacing:0.7px;">Ankle Pain - PT - NO DO...</div>
<div id="t39" class="t" style="left:251.10px;top:201.18px;font-size:13.04px;color:#6b7385;font-weight:400;transform:scaleX(1.0339);transform-origin:0 0;letter-spacing:0.8px;">Next visit 5/10/23</div>
<svg style="left:29.600000000000012px;top:259.6px;" width="24" height="24" viewBox="0 0 24 24"><circle cx="11.8" cy="5.6" r="5.6" fill="#8891a2"/><path d="M0.5 23 V20.5 C0.5 16.5 7 14.4 12 14.4 C17 14.4 23.5 16.5 23.5 20.5 V23 Z" fill="#8891a2"/></svg>
<div id="t40" class="t" style="left:72.09px;top:250.55px;font-size:16.59px;color:#3b4357;font-weight:400;-webkit-text-stroke:0.45px currentColor;transform:scaleX(1.1053);transform-origin:0 0;">Miranda 1A Bailey</div>
<div id="t41" class="t" style="left:71.95px;top:278.90px;font-size:12.39px;color:#4a5fd0;font-weight:400;-webkit-text-stroke:0.45px currentColor;transform:scaleX(1.0828);transform-origin:0 0;letter-spacing:0.7px;">5 active cases</div>
<div id="t42" class="t" style="left:258.10px;top:278.58px;font-size:13.04px;color:#6b7385;font-weight:400;transform:scaleX(1.0481);transform-origin:0 0;letter-spacing:0.8px;">Next visit 5/9/23</div>
<svg style="left:29.600000000000012px;top:337.0000000000001px;" width="24" height="24" viewBox="0 0 24 24"><circle cx="11.8" cy="5.6" r="5.6" fill="#8891a2"/><path d="M0.5 23 V20.5 C0.5 16.5 7 14.4 12 14.4 C17 14.4 23.5 16.5 23.5 20.5 V23 Z" fill="#8891a2"/></svg>
<div id="t43" class="t" style="left:72.02px;top:327.95px;font-size:16.59px;color:#3b4357;font-weight:400;-webkit-text-stroke:0.45px currentColor;transform:scaleX(1.1053);transform-origin:0 0;">Miranda 1A Bailey</div>
<div id="t44" class="t" style="left:72.80px;top:356.30px;font-size:12.39px;color:#4a5fd0;font-weight:400;-webkit-text-stroke:0.45px currentColor;transform:scaleX(1.0525);transform-origin:0 0;letter-spacing:0.7px;">Aquatic - Lumbar Spine ...</div>
<div id="t45" class="t" style="left:256.93px;top:355.98px;font-size:13.04px;color:#6b7385;font-weight:400;transform:scaleX(1.0500);transform-origin:0 0;letter-spacing:0.8px;">Next visit 5/9/23</div>
<svg style="left:29.600000000000012px;top:414.4px;" width="24" height="24" viewBox="0 0 24 24"><circle cx="11.8" cy="5.6" r="5.6" fill="#8891a2"/><path d="M0.5 23 V20.5 C0.5 16.5 7 14.4 12 14.4 C17 14.4 23.5 16.5 23.5 20.5 V23 Z" fill="#8891a2"/></svg>
<div id="t46" class="t" style="left:71.39px;top:405.35px;font-size:16.59px;color:#3b4357;font-weight:400;-webkit-text-stroke:0.45px currentColor;transform:scaleX(1.1300);transform-origin:0 0;">Lou 2</div>
<div id="t47" class="t" style="left:72.65px;top:433.70px;font-size:12.39px;color:#4a5fd0;font-weight:400;-webkit-text-stroke:0.45px currentColor;transform:scaleX(1.0828);transform-origin:0 0;letter-spacing:0.7px;">2 active cases</div>
<div id="t48" class="t" style="left:248.80px;top:433.38px;font-size:13.04px;color:#8a909c;font-weight:400;transform:scaleX(0.9983);transform-origin:0 0;letter-spacing:0.8px;">No visit scheduled</div>
<svg style="left:29.600000000000012px;top:491.80000000000007px;" width="24" height="24" viewBox="0 0 24 24"><circle cx="11.8" cy="5.6" r="5.6" fill="#8891a2"/><path d="M0.5 23 V20.5 C0.5 16.5 7 14.4 12 14.4 C17 14.4 23.5 16.5 23.5 20.5 V23 Z" fill="#8891a2"/></svg>
<div id="t49" class="t" style="left:72.92px;top:482.75px;font-size:16.59px;color:#3b4357;font-weight:400;-webkit-text-stroke:0.45px currentColor;transform:scaleX(1.1202);transform-origin:0 0;">Test 2BBBBB</div>
<div id="t50" class="t" style="left:72.66px;top:511.10px;font-size:12.39px;color:#4a5fd0;font-weight:400;-webkit-text-stroke:0.45px currentColor;transform:scaleX(1.0828);transform-origin:0 0;letter-spacing:0.7px;">2 active cases</div>
<div id="t51" class="t" style="left:248.80px;top:510.78px;font-size:13.04px;color:#8a909c;font-weight:400;transform:scaleX(0.9983);transform-origin:0 0;letter-spacing:0.8px;">No visit scheduled</div>
<svg style="left:29.600000000000012px;top:569.2000000000002px;" width="24" height="24" viewBox="0 0 24 24"><circle cx="11.8" cy="5.6" r="5.6" fill="#8891a2"/><path d="M0.5 23 V20.5 C0.5 16.5 7 14.4 12 14.4 C17 14.4 23.5 16.5 23.5 20.5 V23 Z" fill="#8891a2"/></svg>
<div id="t52" class="t" style="left:73.47px;top:560.15px;font-size:16.59px;color:#3b4357;font-weight:400;-webkit-text-stroke:0.45px currentColor;transform:scaleX(1.1323);transform-origin:0 0;">Augu 30</div>
<div id="t53" class="t" style="left:72.92px;top:588.50px;font-size:12.39px;color:#4a5fd0;font-weight:400;-webkit-text-stroke:0.45px currentColor;transform:scaleX(1.0705);transform-origin:0 0;letter-spacing:0.7px;">3 active cases</div>
<div id="t54" class="t" style="left:248.80px;top:588.18px;font-size:13.04px;color:#8a909c;font-weight:400;transform:scaleX(0.9983);transform-origin:0 0;letter-spacing:0.8px;">No visit scheduled</div>
<svg style="left:29.600000000000012px;top:646.6px;" width="24" height="24" viewBox="0 0 24 24"><circle cx="11.8" cy="5.6" r="5.6" fill="#8891a2"/><path d="M0.5 23 V20.5 C0.5 16.5 7 14.4 12 14.4 C17 14.4 23.5 16.5 23.5 20.5 V23 Z" fill="#8891a2"/></svg>
<div id="t55" class="t" style="left:71.12px;top:637.55px;font-size:16.59px;color:#3b4357;font-weight:400;-webkit-text-stroke:0.45px currentColor;transform:scaleX(1.1323);transform-origin:0 0;">Beth 3C Therapy</div>
<div id="t56" class="t" style="left:71.88px;top:665.90px;font-size:12.39px;color:#4a5fd0;font-weight:400;-webkit-text-stroke:0.45px currentColor;transform:scaleX(1.0851);transform-origin:0 0;letter-spacing:0.7px;">Knee Hurts</div>
<div id="t57" class="t" style="left:251.20px;top:665.58px;font-size:13.04px;color:#6b7385;font-weight:400;transform:scaleX(1.0312);transform-origin:0 0;letter-spacing:0.8px;">Next visit 5/15/23</div>
</div>
<div class="a" style="left:658px;top:214px;width:942px;height:827px;background:#e9e9e9;"></div>
<div class="a" style="left:657px;top:214px;width:2px;height:827px;background:#c6c8cc;"></div>
<div class="a" style="left:659px;top:214px;width:925px;height:245px;background:#fff;"></div>
<div class="a" style="left:1584px;top:214px;width:16px;height:53px;background:#fff;"></div>
<div class="a" style="left:659px;top:458px;width:925px;height:1.5px;background:#b9b9b9;"></div>
<div class="a" style="left:659px;top:459.5px;width:925px;height:5px;background:linear-gradient(rgba(0,0,0,0.06),rgba(0,0,0,0));"></div>
<svg style="left:1560px;top:228px;" width="26" height="26" viewBox="1560 228 26 26"><path d="M1566.9 238.3 V233.6 H1571.4 M1576.3 233.6 H1580.9 V238.3 M1566.9 242.5 V247.3 H1571.4 M1576.3 247.3 H1580.9 V242.5" fill="none" stroke="#4a5570" stroke-width="1.5"/></svg>
<div class="a" style="left:1583.6px;top:267px;width:16.4px;height:774px;background:#f9f9f9;border-left:1px solid #ebebeb;"></div>
<div class="a" style="left:1588px;top:270px;width:9px;height:509px;background:#c2c2c2;border-radius:5px;"></div>
<div id="t58" class="t" style="left:670.34px;top:280.31px;font-size:13.48px;color:#6b7588;font-weight:400;transform:scaleX(1.0625);transform-origin:0 0;">Patient</div>
<div id="t59" class="t" style="left:672.24px;top:293.13px;font-size:37.25px;color:#4a5570;font-weight:400;transform:scaleX(1.0216);transform-origin:0 0;">Kelly Shovlin</div>
<div id="t60" class="t" style="left:671.47px;top:334.73px;font-size:13.33px;color:#6b7588;font-weight:400;transform:scaleX(1.0060);transform-origin:0 0;">Acct#: 102773-PER</div>
<div class="a" style="left:663px;top:356px;width:69.5px;height:26px;background:#cdeef8;border-radius:13px;"></div>
<div id="t61" class="t" style="left:675.91px;top:362.21px;font-size:14.78px;color:#2f5d9a;font-weight:700;transform:scaleX(0.9021);transform-origin:0 0;">Details</div>
<div class="a" style="left:743px;top:356px;width:62px;height:24.7px;background:transparent;border:3.5px solid #e00f0f;"></div>
<div id="t62" class="t" style="left:754.56px;top:362.53px;font-size:14.13px;color:#4b5568;font-weight:400;-webkit-text-stroke:0.45px currentColor;transform:scaleX(0.9175);transform-origin:0 0;">Cases</div>
<div id="t63" class="t" style="left:828.00px;top:362.53px;font-size:14.13px;color:#4b5568;font-weight:400;-webkit-text-stroke:0.45px currentColor;transform:scaleX(1.0029);transform-origin:0 0;">Visits</div>
<div id="t64" class="t" style="left:897.22px;top:362.53px;font-size:14.13px;color:#4b5568;font-weight:400;-webkit-text-stroke:0.45px currentColor;transform:scaleX(0.9000);transform-origin:0 0;">HEP</div>
<div id="t65" class="t" style="left:958.00px;top:362.53px;font-size:14.13px;color:#4b5568;font-weight:400;-webkit-text-stroke:0.45px currentColor;transform:scaleX(0.9655);transform-origin:0 0;">Files</div>
<svg style="left:1343px;top:302.6px;" width="26.3" height="26.3" viewBox="0 0 24 24"><path d="M22 3H2C.9 3 0 3.9 0 5v14c0 1.1.9 2 2 2h20c1.1 0 1.99-.9 1.99-2L24 5c0-1.1-.9-2-2-2zM8 6c1.660 0 3 1.34 3 3s-1.34 3-3 3-3-1.34-3-3 1.34-3 3-3zm6 12H2v-1c0-2 4-3.100 6-3.100s6 1.100 6 3.100v1zm3.85-4h1.64L21 16l-1.99 1.99c-1.31-.98-2.28-2.38-2.73-3.99-.18-.64-.28-1.31-.28-2s.1-1.36.28-2c.45-1.62 1.42-3.01 2.73-3.99L21 8l-1.51 2h-1.64c-.22.63-.35 1.3-.35 2s.13 1.37.35 2z" fill="#8a93a3"/></svg>
<svg style="left:1390.8px;top:302.4px;" width="26.2" height="26.2" viewBox="0 0 24 24"><path d="M20 6h-8l-2-2H4c-1.1 0-1.99.9-1.99 2L2 18c0 1.1.9 2 2 2h16c1.1 0 2-.9 2-2V8c0-1.1-.9-2-2-2zm-5 3c1.1 0 2 .9 2 2s-.9 2-2 2-2-.9-2-2 .9-2 2-2zm4 8h-8v-1c0-1.33 2.67-2 4-2s4 .67 4 2v1z" fill="#8a93a3"/></svg>
<div class="a" style="left:1428px;top:296.5px;width:142.5px;height:38.5px;background:#f7f8fa;border-radius:3px;"></div>
<svg style="left:1445.9px;top:302.8px;" width="26.2" height="26.2" viewBox="0 0 24 24"><path d="M1 21h4V9H1v12zm22-11c0-1.1-.9-2-2-2h-6.31l.95-4.57.03-.32c0-.41-.17-.79-.44-1.06L14.17 1 7.59 7.59C7.22 7.95 7 8.45 7 9v10c0 1.1.9 2 2 2h9c.83 0 1.54-.5 1.84-1.22l3.02-7.05c.09-.23.14-.47.14-.73v-2z" fill="#687185"/></svg>
<div id="t66" class="t" style="left:1484.97px;top:307.84px;font-size:16.52px;color:#5d6678;font-weight:400;-webkit-text-stroke:0.6px currentColor;transform:scaleX(1.0391);transform-origin:0 0;">Eligibility</div>
<div class="a" style="left:659px;top:403px;width:925px;height:1px;background:#dcdcdc;"></div>
<div id="t67" class="t" style="left:1460.21px;top:423.88px;font-size:15.14px;color:#4a5dcc;font-weight:400;-webkit-text-stroke:0.45px currentColor;transform:scaleX(1.0814);transform-origin:0 0;">Add Insurance</div>
<div class="a" style="left:703.5px;top:472.5px;width:835.5px;height:488px;background:#fff;border-radius:5px;box-shadow:0 1px 3px rgba(0,0,0,0.22),0 0 1px rgba(0,0,0,0.12);"></div>
<div id="t68" class="t" style="left:717.85px;top:495.31px;font-size:16.88px;color:#374158;font-weight:400;-webkit-text-stroke:0.45px currentColor;transform:scaleX(1.1423);transform-origin:0 0;">Patient</div>
<div id="t69" class="t" style="left:1368.08px;top:496.04px;font-size:15.72px;color:#d9506a;font-weight:400;-webkit-text-stroke:0.45px currentColor;transform:scaleX(1.0692);transform-origin:0 0;">Archive</div>
<div class="a" style="left:1441px;top:485.3px;width:84px;height:35px;background:#dbe9fb;border-radius:4px;"></div>
<div id="t70" class="t" style="left:1451.50px;top:496.04px;font-size:15.72px;color:#4a5dcc;font-weight:400;-webkit-text-stroke:0.45px currentColor;transform:scaleX(1.0808);transform-origin:0 0;">Edit</div>
<svg style="left:1489px;top:491px;" width="24" height="24" viewBox="0 0 24 24"><path d="M3 17.25V21h3.75L17.81 9.94l-3.75-3.75L3 17.25zM20.71 7.04c.39-.39.39-1.02 0-1.41l-2.34-2.34c-.39-.39-1.02-.39-1.41 0l-1.83 1.83 3.75 3.75 1.83-1.83z" fill="#4a5dcc"/></svg>
<div class="a" style="left:703.5px;top:533.5px;width:835.5px;height:1.5px;background:#e8eaee;"></div>
<div id="t71" class="t" style="left:729.12px;top:565.36px;font-size:13.19px;color:#6b7588;font-weight:400;transform:scaleX(1.0364);transform-origin:0 0;">Name</div>
<div id="t72" class="t" style="left:729.65px;top:587.24px;font-size:17.83px;color:#3b4459;font-weight:400;transform:scaleX(1.0114);transform-origin:0 0;">Kelly Angel Shovlin</div>
<div id="t73" class="t" style="left:1121.02px;top:565.56px;font-size:13.19px;color:#6b7588;font-weight:400;transform:scaleX(1.0485);transform-origin:0 0;">Account Number</div>
<div id="t74" class="t" style="left:1119.99px;top:587.94px;font-size:17.83px;color:#3b4459;font-weight:400;transform:scaleX(0.9815);transform-origin:0 0;">102773-PER</div>
<div id="t75" class="t" style="left:1315.73px;top:565.56px;font-size:13.19px;color:#6b7588;font-weight:400;transform:scaleX(1.0337);transform-origin:0 0;">Name Preference</div>
<div class="a" style="left:1318px;top:595.8px;width:5.4px;height:1.4px;background:#3b4459;"></div>
<div id="t76" class="t" style="left:729.15px;top:626.36px;font-size:13.19px;color:#6b7588;font-weight:400;transform:scaleX(1.0775);transform-origin:0 0;">Date of Birth</div>
<div id="t77" class="t" style="left:729.41px;top:648.74px;font-size:17.83px;color:#3b4459;font-weight:400;transform:scaleX(1.0920);transform-origin:0 0;">02/09/1993</div>
<div id="t78" class="t" style="left:925.07px;top:626.36px;font-size:13.19px;color:#6b7588;font-weight:400;transform:scaleX(1.0463);transform-origin:0 0;">Sex at Birth</div>
<div id="t79" class="t" style="left:924.45px;top:648.74px;font-size:17.83px;color:#3b4459;font-weight:400;transform:scaleX(1.0193);transform-origin:0 0;">Female</div>
<div id="t80" class="t" style="left:1119.65px;top:626.46px;font-size:13.19px;color:#6b7588;font-weight:400;transform:scaleX(1.0668);transform-origin:0 0;">Identity Pronouns</div>
<div class="a" style="left:1122.6px;top:656.6px;width:5.5px;height:1.4px;background:#3b4459;"></div>
<div class="a" style="left:717.3px;top:696px;width:807.7px;height:1.2px;background:#e3e8ee;"></div>
<div id="t81" class="t" style="left:730.37px;top:727.56px;font-size:13.19px;color:#6b7588;font-weight:400;transform:scaleX(1.0333);transform-origin:0 0;">Address</div>
<div id="t82" class="t" style="left:729.38px;top:750.24px;font-size:17.83px;color:#3b4459;font-weight:400;transform:scaleX(1.0167);transform-origin:0 0;">50 Kent Avenue, Sandringham</div>
<div id="t83" class="t" style="left:729.69px;top:776.44px;font-size:17.83px;color:#3b4459;font-weight:400;transform:scaleX(1.0058);transform-origin:0 0;">Johannesburg, DE 2192</div>
<div id="t84" class="t" style="left:1119.73px;top:727.56px;font-size:13.19px;color:#6b7588;font-weight:400;transform:scaleX(1.0548);transform-origin:0 0;">Email</div>
<div id="t85" class="t" style="left:1120.46px;top:750.24px;font-size:17.83px;color:#3b4459;font-weight:400;transform:scaleX(1.0288);transform-origin:0 0;">rundmc@mailinator.com</div>
<div id="t86" class="t" style="left:729.44px;top:815.06px;font-size:13.19px;color:#6b7588;font-weight:400;transform:scaleX(1.0266);transform-origin:0 0;">Mobile Phone</div>
<div id="t87" class="t" style="left:729.47px;top:837.04px;font-size:17.83px;color:#3b4459;font-weight:400;transform:scaleX(0.9744);transform-origin:0 0;">(123) 123-1234</div>
<div id="t88" class="t" style="left:1120.06px;top:815.06px;font-size:13.19px;color:#6b7588;font-weight:400;transform:scaleX(1.0333);transform-origin:0 0;">Home Phone</div>
<div id="t89" class="t" style="left:1119.80px;top:837.04px;font-size:17.83px;color:#3b4459;font-weight:400;transform:scaleX(0.9825);transform-origin:0 0;">(123) 123-1234</div>
<div class="a" style="left:717.3px;top:884px;width:807.7px;height:1.2px;background:#e3e8ee;"></div>
<div class="a" style="left:717.3px;top:912.25px;width:807.5px;height:33.5px;background:#f3f8fe;border-radius:4px;"></div>
<div id="t90" class="t" style="left:974.61px;top:921.35px;font-size:15.80px;color:#4a5dcc;font-weight:400;-webkit-text-stroke:0.6px currentColor;transform:scaleX(1.0486);transform-origin:0 0;">Customize Communication Preferences</div>
<div class="a" style="left:703.5px;top:987.5px;width:835.5px;height:80px;background:#fff;border-radius:5px;box-shadow:0 1px 3px rgba(0,0,0,0.22),0 0 1px rgba(0,0,0,0.12);"></div>
<div id="t91" class="t" style="left:717.44px;top:1014.65px;font-size:16.59px;color:#374158;font-weight:400;-webkit-text-stroke:0.45px currentColor;transform:scaleX(1.1080);transform-origin:0 0;">Payers</div>
<div class="a" style="left:1336.5px;top:1005.3px;width:36px;height:36px;background:#fff;border:1px solid #e3e6ea;border-radius:50%;"></div>
<div id="t92" class="t" style="left:1350.47px;top:1017.11px;font-size:12.97px;color:#374158;font-weight:400;-webkit-text-stroke:0.45px currentColor;">0</div>
<div class="a" style="left:1392.5px;top:1003px;width:132.3px;height:40px;background:#dbe9fb;border-radius:4px;"></div>
<div id="t93" class="t" style="left:1405.62px;top:1015.53px;font-size:15.94px;color:#2f48a8;font-weight:400;-webkit-text-stroke:0.6px currentColor;transform:scaleX(1.0233);transform-origin:0 0;">Add Insurance</div>
<div class="a" style="left:250px;top:214px;width:1350px;height:13px;background:linear-gradient(rgba(0,0,0,0.20),rgba(0,0,0,0.07) 35%,rgba(0,0,0,0));"></div>
<div class="a" style="left:250px;top:214px;width:8px;height:827px;background:linear-gradient(90deg,rgba(0,0,0,0.20),rgba(0,0,0,0.06) 50%,rgba(0,0,0,0));"></div>
</body></html>
